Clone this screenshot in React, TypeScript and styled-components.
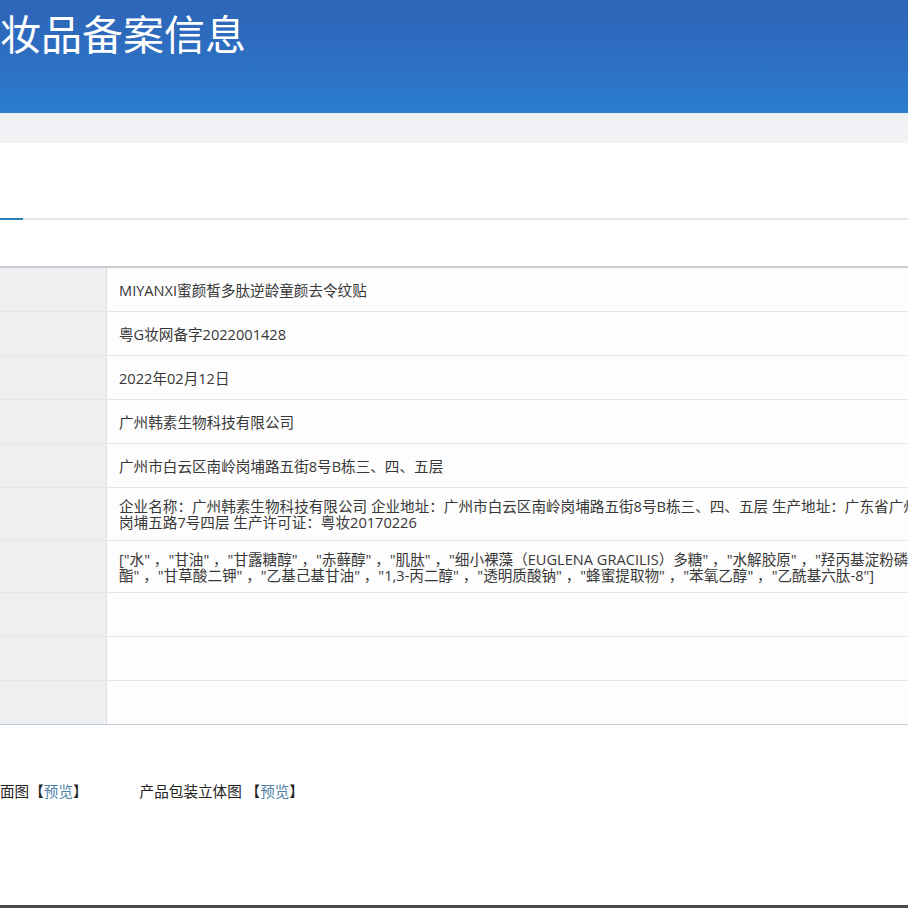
import React from 'react';
import styled, {createGlobalStyle} from "styled-components";

const GlobalStyle = createGlobalStyle`
    html, body {
        margin: 0;
        padding: 0;
        background: #ffffff;
        overflow: hidden;
    }
    body {
        font-family: "Open Sans", "Noto Sans CJK SC", sans-serif;
        color: #333333;
    }
`

type Row = { lines: string[]; tall?: number };

const rows: Row[] = [
    {lines: ["MIYANXI蜜颜皙多肽逆龄童颜去令纹贴"]},
    {lines: ["粤G妆网备字2022001428"]},
    {lines: ["2022年02月12日"]},
    {lines: ["广州韩素生物科技有限公司"]},
    {lines: ["广州市白云区南岭岗埔路五街8号B栋三、四、五层"]},
    {
        lines: [
            "企业名称：广州韩素生物科技有限公司 企业地址：广州市白云区南岭岗埔路五街8号B栋三、四、五层 生产地址：广东省广州市白云区南岭",
            "岗埔五路7号四层 生产许可证：粤妆20170226",
        ],
        tall: 53,
    },
    {
        lines: [
            "[\"水\" ，\"甘油\" ，\"甘露糖醇\" ，\"赤藓醇\" ，\"肌肽\" ，\"细小裸藻（EUGLENA GRACILIS）多糖\" ，\"水解胶原\" ，\"羟丙基淀粉磷酸",
            "酯\" ，\"甘草酸二钾\" ，\"乙基己基甘油\" ，\"1,3-丙二醇\" ，\"透明质酸钠\" ，\"蜂蜜提取物\" ，\"苯氧乙醇\" ，\"乙酰基六肽-8\"]",
        ],
        tall: 52,
    },
    {lines: []},
    {lines: []},
    {lines: []},
];

export default function App() {
    return (
        <Page>
            <GlobalStyle/>
            <Header>
                <Title>妆品备案信息</Title>
            </Header>
            <SubBand/>
            <TabArea>
                <TabLine>
                    <span className={"active"}/>
                </TabLine>
            </TabArea>
            <Table>
                {rows.map((row, i) => (
                    <TableRow key={i} $height={row.tall ?? 44} $last={i === rows.length - 1}>
                        <Label/>
                        <Value>
                            {row.lines.map((line, j) => (
                                <Line key={j}>{line}</Line>
                            ))}
                        </Value>
                    </TableRow>
                ))}
            </Table>
            <Footer>
                <Attachments>
                    <Attachment>面图【<Preview>预览</Preview>】</Attachment>
                    <Attachment>产品包装立体图 【<Preview>预览</Preview>】</Attachment>
                </Attachments>
            </Footer>
        </Page>
    );
}

const Page = styled.div`
    width: 908px;
    height: 908px;
    display: flex;
    flex-direction: column;
    overflow: hidden;
`
const Header = styled.header`
    height: 113px;
    flex-shrink: 0;
    background: linear-gradient(180deg, #2e64b7 0%, #2d70c2 55%, #2a7dcf 100%);
    box-sizing: border-box;
    padding-top: 8px;
`
const Title = styled.h1`
    margin: 0;
    font-family: "Noto Sans CJK SC", sans-serif;
    font-weight: 400;
    font-size: 41px;
    line-height: 48px;
    color: #ffffff;
    white-space: nowrap;
`
const SubBand = styled.div`
    height: 30px;
    flex-shrink: 0;
    background: linear-gradient(180deg, #edf0f3 0%, #f3f4f6 100%);
`
const TabArea = styled.div`
    height: 123px;
    flex-shrink: 0;
    padding-top: 75px;
    box-sizing: border-box;
`
const TabLine = styled.div`
    height: 2px;
    background: #e3e5e8;
    
    span {
        display: block;
        height: 2px;
        
        &.active {
            width: 23px;
            background-color: #2f80b6;
        }
    }
`
const Table = styled.div`
    border-top: 2px solid #c9cdd2;
    flex-shrink: 0;
`
const TableRow = styled.div<{ $height: number; $last: boolean }>`
    display: grid;
    grid-template-columns: 107px 1fr;
    height: ${p => p.$height}px;
    box-sizing: border-box;
    border-bottom: 1px solid ${p => p.$last ? "#c2cbd8" : "#e3e5e8"};
`
const Label = styled.div`
    background: #eeeff1;
    border-right: 1px solid #dcdfe3;
`
const Value = styled.div`
    display: flex;
    flex-direction: column;
    justify-content: center;
    padding: 0 0 0 12px;
    overflow: hidden;
    font-size: 14.6px;
    line-height: 16px;
    color: #383838;
    background: #fdfdfd;
`
const Line = styled.span`
    display: block;
    white-space: nowrap;
`
const Footer = styled.div`
    flex: 1;
    border-bottom: 3px solid #4a4a4a;
    padding-top: 56px;
`
const Attachments = styled.div`
    display: flex;
    gap: 52px;
    font-size: 14.6px;
    line-height: 20px;
    color: #222222;
`
const Attachment = styled.span`
    white-space: nowrap;
`
const Preview = styled.span`
    color: #4f82a8;
`
